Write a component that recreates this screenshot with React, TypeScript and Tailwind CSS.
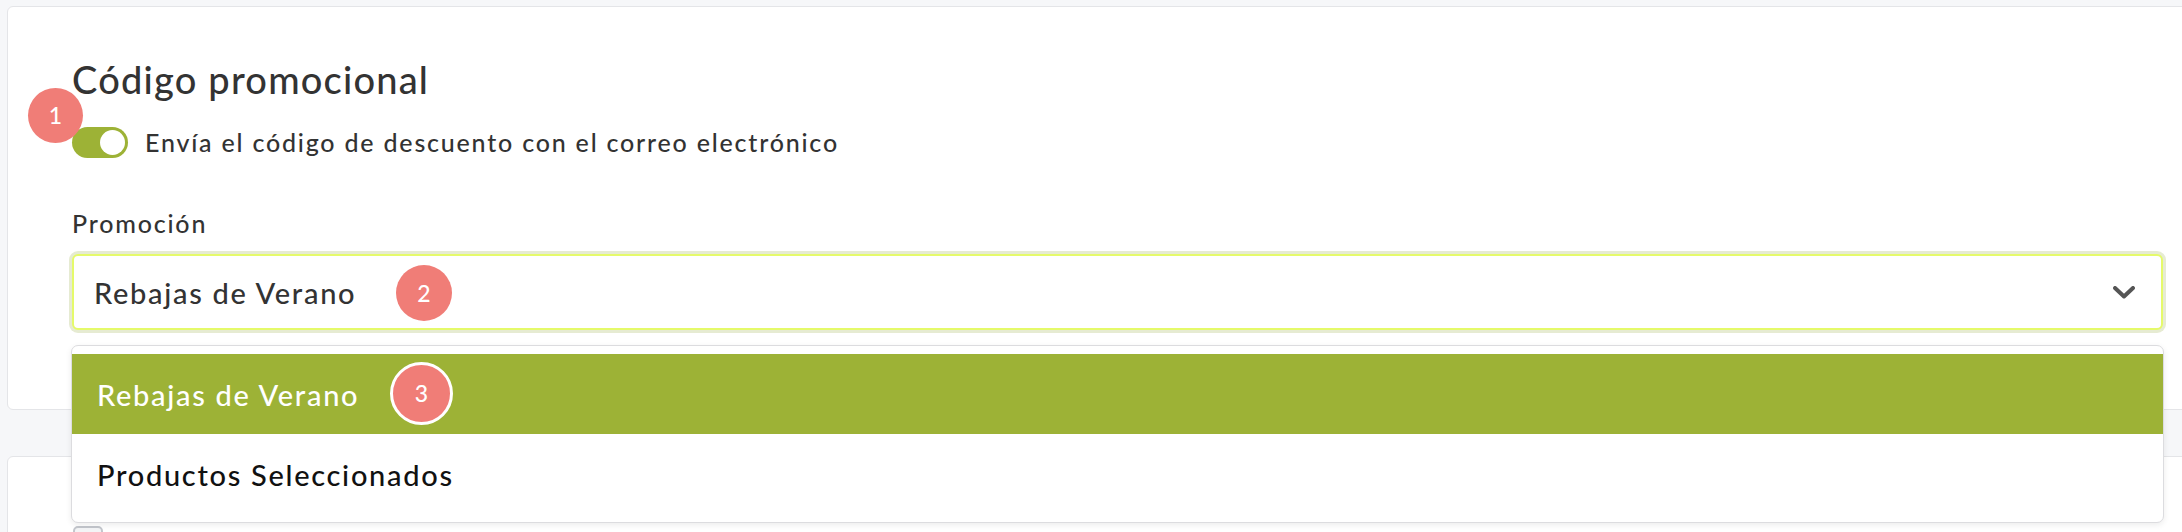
export default function App() {
  return (
    <div
      className="relative w-[2182px] h-[532px] overflow-hidden bg-[#f6f7f9] pt-[6px] pl-[7px] text-[#333]"
      style={{ fontFamily: 'Lato, "Noto Sans", sans-serif' }}
    >
      {/* Card 1 */}
      <div className="relative w-[2200px] h-[404px] bg-white border border-[#e4e5e8] rounded-[6px] pl-[64px] pt-[53px]">
        <h2 className="text-[38px] leading-[38px] font-medium tracking-[1.2px] text-[#333]">Código promocional</h2>

        <div className="mt-[29px] flex items-center gap-[17px] h-[31px]">
          <div className="w-[56px] h-[31px] rounded-full bg-[#9db236] flex items-center justify-end pr-[3px]">
            <div className="w-[25px] h-[25px] rounded-full bg-white" />
          </div>
          <span className="text-[25px] leading-[25px] font-medium tracking-[1.8px] text-[#333]">
            Envía el código de descuento con el correo electrónico
          </span>
        </div>

        <div className="mt-[53px] text-[25px] leading-[25px] font-medium tracking-[1.8px] text-[#333]">Promoción</div>

        <div className="relative mt-[18px] w-[2091px]">
          <div className="h-[76px] rounded-[6px] border-2 border-[#e5fa6a] shadow-[0_0_0_3px_#e6ebd2] bg-white flex items-center justify-between pl-[20px] pr-[26px]">
            <span className="text-[29px] leading-[29px] font-medium tracking-[1.7px] text-[#333]">Rebajas de Verano</span>
            <svg width="22" height="13" viewBox="0 0 22 13" fill="none">
              <polyline points="2,2 11,10.5 20,2" stroke="#555" strokeWidth="4" strokeLinecap="round" strokeLinejoin="round" />
            </svg>
          </div>

          {/* Dropdown menu */}
          <div className="absolute z-10 left-[-1px] top-[91px] w-[2093px] h-[178px] bg-white border border-[#dcdcdf] rounded-[7px] shadow-[0_2px_6px_rgba(0,0,0,0.08)] py-[8px]">
            <div className="h-[80px] bg-[#9db236] flex items-center pl-[25px]">
              <span className="text-[29px] leading-[29px] font-medium tracking-[1.7px] text-white">Rebajas de Verano</span>
            </div>
            <div className="h-[80px] flex items-center pl-[25px]">
              <span className="text-[29px] leading-[29px] font-medium tracking-[1.7px] text-[#111]">Productos Seleccionados</span>
            </div>
          </div>
        </div>
      </div>

      {/* Card 2 */}
      <div className="mt-[46px] w-[2200px] h-[200px] bg-white border border-[#e4e5e8] rounded-[6px] pl-[65px] pt-[69px]">
        <div className="w-[30px] h-[30px] rounded-[5px] border-2 border-[#c3c6cc] bg-[#f3f4f6]" />
      </div>

      {/* Step badges */}
      <div className="absolute z-20 left-[28px] top-[88px] w-[55px] h-[55px] rounded-full bg-[#f07d77] flex items-center justify-center text-white text-[23px] font-medium">
        1
      </div>
      <div className="absolute z-20 left-[396px] top-[265px] w-[56px] h-[56px] rounded-full bg-[#f07d77] flex items-center justify-center text-white text-[23px] font-medium">
        2
      </div>
      <div className="absolute z-20 left-[390px] top-[362px] w-[63px] h-[63px] rounded-full bg-[#f07d77] border-[3px] border-white flex items-center justify-center text-white text-[23px] font-medium">
        3
      </div>
    </div>
  )
}
